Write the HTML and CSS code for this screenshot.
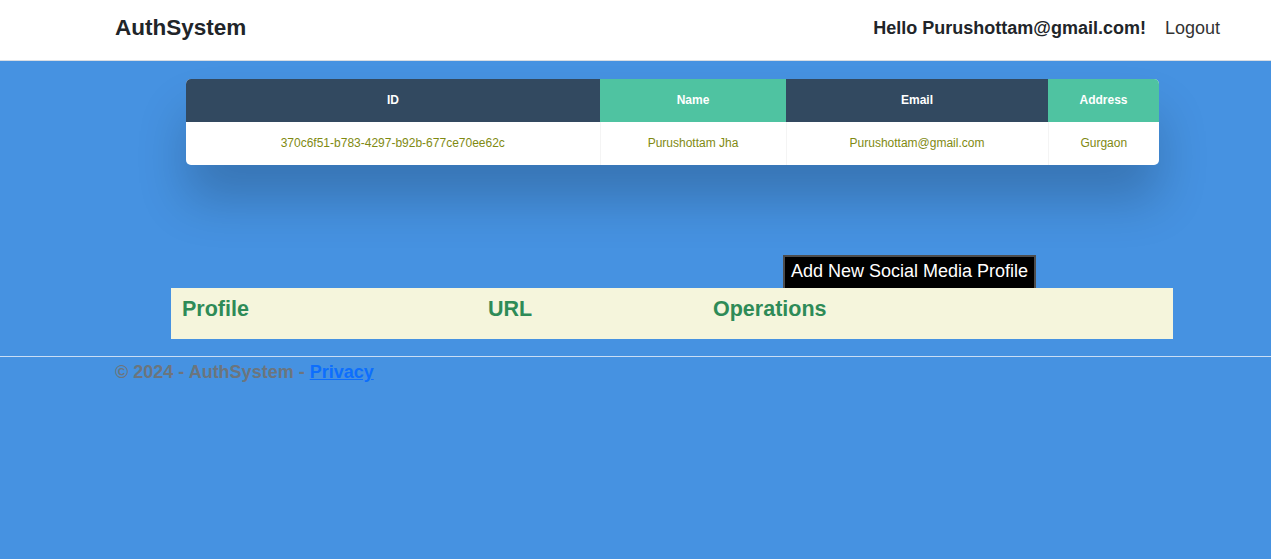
FILE: index.html
```html
<!DOCTYPE html>
<html lang="en">
<head>
<meta charset="utf-8">
<title>AuthSystem</title>
<link rel="stylesheet" href="styles.css">
</head>
<body>
<header class="navbar">
  <div class="container nav-inner">
    <a class="brand" href="#">AuthSystem</a>
    <div class="nav-right">
      <span class="hello">Hello Purushottam@gmail.com!</span>
      <a class="logout" href="#">Logout</a>
    </div>
  </div>
</header>
<main class="container main">
  <div class="table-wrapper">
    <table class="fl-table">
      <thead>
        <tr>
          <th class="c-id">ID</th>
          <th class="c-name">Name</th>
          <th class="c-email">Email</th>
          <th class="c-addr">Address</th>
        </tr>
      </thead>
      <tbody>
        <tr>
          <td>370c6f51-b783-4297-b92b-677ce70ee62c</td>
          <td>Purushottam Jha</td>
          <td>Purushottam@gmail.com</td>
          <td>Gurgaon</td>
        </tr>
      </tbody>
    </table>
  </div>
  <div class="btn-row">
    <button class="add-btn" type="button">Add New Social Media Profile</button>
  </div>
  <table class="profile-table">
    <thead>
      <tr>
        <th class="p-profile">Profile</th>
        <th class="p-url">URL</th>
        <th class="p-ops">Operations</th>
      </tr>
    </thead>
  </table>
</main>
<footer class="footer">
  <div class="container">
    &copy; 2024 - AuthSystem - <a href="#" class="privacy">Privacy</a>
  </div>
</footer>
</body>
</html>
```
FILE: styles.css
```css
* { box-sizing: border-box; }
html, body { margin: 0; padding: 0; }
body {
  background: #4692e1;
  font-family: "Liberation Sans", Arial, sans-serif;
  color: #212529;
  min-height: 559px;
}
.container {
  padding-left: 115px;
  padding-right: 42px;
}
.navbar {
  background: #fff;
  height: 61px;
  border-bottom: 1px solid #d8dde3;
}
.nav-inner {
  display: flex;
  align-items: center;
  justify-content: space-between;
  height: 60px;
}
.brand {
  font-size: 22.5px;
  font-weight: bold;
  color: #212529;
  text-decoration: none;
  padding-bottom: 4px;
}
.nav-right {
  display: flex;
  align-items: center;
  gap: 19px;
  padding-right: 9px;
  padding-bottom: 4px;
}
.hello {
  font-size: 18px;
  font-weight: bold;
}
.logout {
  font-size: 18px;
  color: #333;
  text-decoration: none;
}
.main {
  padding-top: 18px;
}
.table-wrapper {
  margin: 0 0 0 71px;
  width: 973px;
  box-shadow: 0 35px 50px rgba(0, 0, 0, 0.2);
  border-radius: 5px;
}
.fl-table {
  width: 100%;
  border-collapse: collapse;
  background: #fff;
  font-size: 12px;
  border-radius: 5px;
  overflow: hidden;
  white-space: nowrap;
}
.fl-table th,
.fl-table td {
  text-align: center;
  padding: 0 8px;
}
.fl-table th {
  height: 43px;
  padding-bottom: 2px;
  color: #fff;
  font-weight: bold;
  background: #4fc3a1;
}
.fl-table td {
  height: 43px;
  padding-bottom: 1px;
  color: #7f8a12;
  border-right: 1px solid #f4f4f4;
}
.fl-table th.c-id,
.fl-table th.c-email {
  background: #324960;
}
.fl-table td:last-child { border-right: none; }
.c-id { width: 414px; }
.c-name { width: 186px; }
.c-email { width: 262px; }
.c-addr { width: 111px; }
.btn-row {
  margin-top: 90px;
  display: flex;
  padding-left: 668px;
}
.add-btn {
  background: #000;
  color: #fff;
  font-family: "Liberation Sans", Arial, sans-serif;
  font-size: 18px;
  padding: 3px 6px 5px;
  height: 33px;
  border: 2px solid #4d4d4d;
  border-bottom: none;
  line-height: 21px;
  cursor: pointer;
}
.profile-table {
  width: 1002px;
  margin: 0 0 0 56px;
  border-collapse: collapse;
  background: #f5f5dc;
}
.profile-table th {
  text-align: left;
  color: #2e8b57;
  font-size: 21.5px;
  font-weight: bold;
  height: 51px;
  padding: 0 11px 9px;
}
.p-profile { width: 306px; }
.p-url { width: 225px; }
.footer {
  margin-top: 17px;
  border-top: 1px solid #c9def5;
  padding-top: 4px;
  font-size: 18px;
  font-weight: bold;
  color: #6c757d;
  line-height: 22px;
}
.privacy {
  color: #0d6efd;
  text-decoration: underline;
}
```
